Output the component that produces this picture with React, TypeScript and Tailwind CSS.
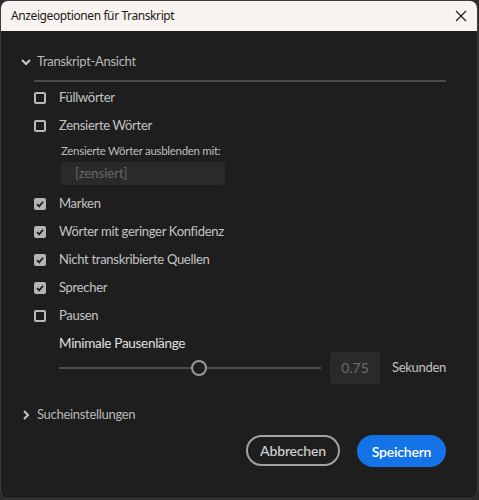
import type { ReactNode } from "react";

const ROWS: { label: string; checked: boolean }[] = [
  { label: "Marken", checked: true },
  { label: "Wörter mit geringer Konfidenz", checked: true },
  { label: "Nicht transkribierte Quellen", checked: true },
  { label: "Sprecher", checked: true },
  { label: "Pausen", checked: false },
];

function Chevron({ open }: { open: boolean }) {
  return (
    <svg width="12" height="12" viewBox="0 0 12 12" className="shrink-0">
      {open ? (
        <path d="M2 4 L6 8 L10 4" fill="none" stroke="#c8c8c8" strokeWidth="2" />
      ) : (
        <path d="M4 2 L8 6 L4 10" fill="none" stroke="#c8c8c8" strokeWidth="2" />
      )}
    </svg>
  );
}

function Check({ checked, label }: { checked: boolean; label: ReactNode }) {
  return (
    <div className="flex items-center h-[28px]">
      {checked ? (
        <span className="w-[12px] h-[12px] rounded-[2px] bg-[#b4b4b4] flex items-center justify-center">
          <svg width="10" height="10" viewBox="0 0 10 10">
            <path d="M2 5.2 L4.2 7.4 L8 2.8" fill="none" stroke="#1e1e1e" strokeWidth="1.8" />
          </svg>
        </span>
      ) : (
        <span className="w-[12px] h-[12px] rounded-[2px] border-2 border-[#b8b8b8] bg-[#1e1e1e]" />
      )}
      <span className="ml-[13px] text-[13px] tracking-[-0.3px] text-[#c4c4c4]">{label}</span>
    </div>
  );
}

export default function App() {
  return (
    <div className="w-[479px] h-[500px] bg-[#2c2c2c]">
      <div
        className="w-[478px] h-[499px] rounded-[8px] overflow-hidden border border-[#3c3c3c] bg-[#1e1e1e] flex flex-col"
        style={{ fontFamily: "Lato, 'Open Sans', sans-serif" }}
      >
        <div className="h-[30px] bg-[#f9f3f2] flex items-center justify-between pl-[10px] pr-[10px] shrink-0">
          <span
            className="text-[12px] tracking-[-0.4px] text-[#1a1a1a]"
            style={{ fontFamily: "'Noto Sans', sans-serif" }}
          >
            Anzeigeoptionen für Transkript
          </span>
          <svg width="12" height="12" viewBox="0 0 12 12">
            <path d="M1 1 L11 11 M11 1 L1 11" stroke="#1a1a1a" strokeWidth="1.1" />
          </svg>
        </div>

        <div className="flex-1 flex flex-col pl-[18px] pr-[31px] pt-[21px]">
          <div className="flex items-center gap-[5px] pl-[1px]">
            <Chevron open />
            <span className="text-[13px] tracking-[-0.3px] text-[#b8b8b8]">Transkript-Ansicht</span>
          </div>
          <div className="ml-[15px] mt-[8px] h-[2px] bg-[#4a4a4a]" />

          <div className="ml-[15px] mt-[2px] flex flex-col">
            <Check checked={false} label="Füllwörter" />
            <Check checked={false} label="Zensierte Wörter" />
            <div className="ml-[27px] flex flex-col">
              <span className="text-[11.5px] tracking-[-0.3px] text-[#bdbdbd] mt-[2px]">Zensierte Wörter ausblenden mit:</span>
              <div className="mt-[3px] w-[164px] h-[23px] bg-[#2a2a2a] rounded-[3px] flex items-center pl-[14px] text-[13px] text-[#686868]">
                [zensiert]
              </div>
            </div>
            <div className="mt-[5px]">
              {ROWS.map((r) => (
                <Check key={r.label} checked={r.checked} label={r.label} />
              ))}
            </div>

            <div className="ml-[25px] mt-[5px] flex flex-col">
              <span className="text-[13.5px] leading-[16px] tracking-[-0.3px] text-[#e0e0e0]">Minimale Pausenlänge</span>
              <div className="flex items-center mt-[1px]">
                <div className="relative w-[262px] h-[20px] flex items-center">
                  <div className="w-full h-[2px] bg-[#4e4e4e]" />
                  <div className="absolute left-[132px] top-[2px] w-[16px] h-[16px] rounded-full border-2 border-[#9a9a9a] bg-[#1e1e1e]" />
                </div>
                <div className="ml-[9px] w-[50px] h-[32px] bg-[#2a2a2a] rounded-[3px] flex items-center justify-center text-[14px] text-[#6a6a6a]">
                  0.75
                </div>
                <span className="ml-[12px] text-[13px] tracking-[-0.3px] text-[#c4c4c4]">Sekunden</span>
              </div>
            </div>
          </div>

          <div className="mt-[21px] flex items-center gap-[5px] pl-[1px]">
            <Chevron open={false} />
            <span className="text-[13px] tracking-[-0.3px] text-[#b8b8b8]">Sucheinstellungen</span>
          </div>

          <div className="mt-[11px] flex justify-end gap-[17px]">
            <button className="h-[31px] w-[94px] rounded-full border-2 border-[#a2a2a2] text-[14px] tracking-[-0.2px] text-[#c8c8c8] font-semibold">
              Abbrechen
            </button>
            <button className="h-[32px] w-[89px] rounded-full bg-[#1473e6] text-[14px] tracking-[-0.2px] text-white font-semibold">
              Speichern
            </button>
          </div>
        </div>
      </div>
    </div>
  );
}
